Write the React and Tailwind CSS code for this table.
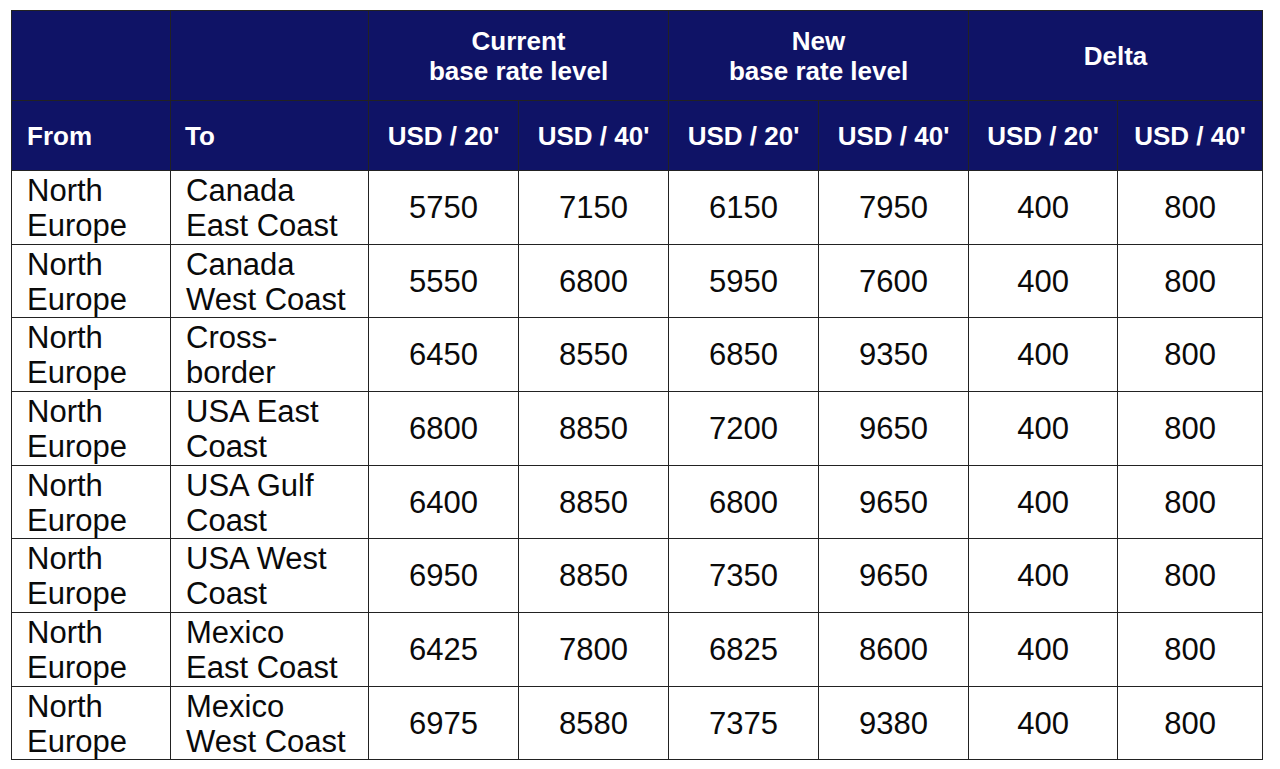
import React from "react";

const rows = [
  ["North\nEurope", "Canada\nEast Coast", "5750", "7150", "6150", "7950", "400", "800"],
  ["North\nEurope", "Canada\nWest Coast", "5550", "6800", "5950", "7600", "400", "800"],
  ["North\nEurope", "Cross-\nborder", "6450", "8550", "6850", "9350", "400", "800"],
  ["North\nEurope", "USA East\nCoast", "6800", "8850", "7200", "9650", "400", "800"],
  ["North\nEurope", "USA Gulf\nCoast", "6400", "8850", "6800", "9650", "400", "800"],
  ["North\nEurope", "USA West\nCoast", "6950", "8850", "7350", "9650", "400", "800"],
  ["North\nEurope", "Mexico\nEast Coast", "6425", "7800", "6825", "8600", "400", "800"],
  ["North\nEurope", "Mexico\nWest Coast", "6975", "8580", "7375", "9380", "400", "800"],
];

const rowH = ["h-[74px]", "h-[73px]", "h-[74px]", "h-[74px]", "h-[73px]", "h-[74px]", "h-[74px]", "h-[73px]"];

const widths = [159, 198, 150, 150, 150, 150, 149, 145];

export default function App() {
  return (
    <div className="w-[1280px] h-[769px] bg-white pt-[10px] pl-[11px]" style={{ fontFamily: '"Liberation Sans", Arial, sans-serif' }}>
      <table className="border-collapse table-fixed w-[1251px] border border-[#222]">
        <colgroup>
          {widths.map((w, i) => (
            <col key={i} style={{ width: w }} />
          ))}
        </colgroup>
        <thead>
          <tr className="h-[90px] bg-[#0f1366] text-white font-bold text-[26px] leading-[30px]">
            <th className="border border-[#222] p-0"></th>
            <th className="border border-[#222] p-0"></th>
            <th colSpan={2} className="border border-[#222] p-0 text-center font-bold">
              Current<br />base rate level
            </th>
            <th colSpan={2} className="border border-[#222] p-0 text-center font-bold">
              New<br />base rate level
            </th>
            <th colSpan={2} className="border border-[#222] p-0 text-center font-bold">
              Delta
            </th>
          </tr>
          <tr className="h-[70px] bg-[#0f1366] text-white text-[26px] leading-[30px]">
            <th className="border border-[#222] py-0 pr-0 text-left pl-[15px] font-bold">From</th>
            <th className="border border-[#222] py-0 pr-0 text-left pl-[14px] font-bold">To</th>
            {["USD / 20'", "USD / 40'", "USD / 20'", "USD / 40'", "USD / 20'", "USD / 40'"].map((t, i) => (
              <th key={i} className="border border-[#222] p-0 text-center font-bold whitespace-nowrap">
                {t}
              </th>
            ))}
          </tr>
        </thead>
        <tbody className="text-[31px] leading-[35px] text-[#0a0a0a]">
          {rows.map((r, ri) => (
            <tr key={ri} className={rowH[ri]}>
              {r.map((c, ci) => (
                <td
                  key={ci}
                  className={
                    ci < 2
                      ? "border border-[#222] text-left align-top pl-[15px] pr-0 pt-[2px] pb-0 whitespace-pre-line"
                      : "border border-[#222] p-0 text-center align-middle"
                  }
                >
                  {c}
                </td>
              ))}
            </tr>
          ))}
        </tbody>
      </table>
    </div>
  );
}
